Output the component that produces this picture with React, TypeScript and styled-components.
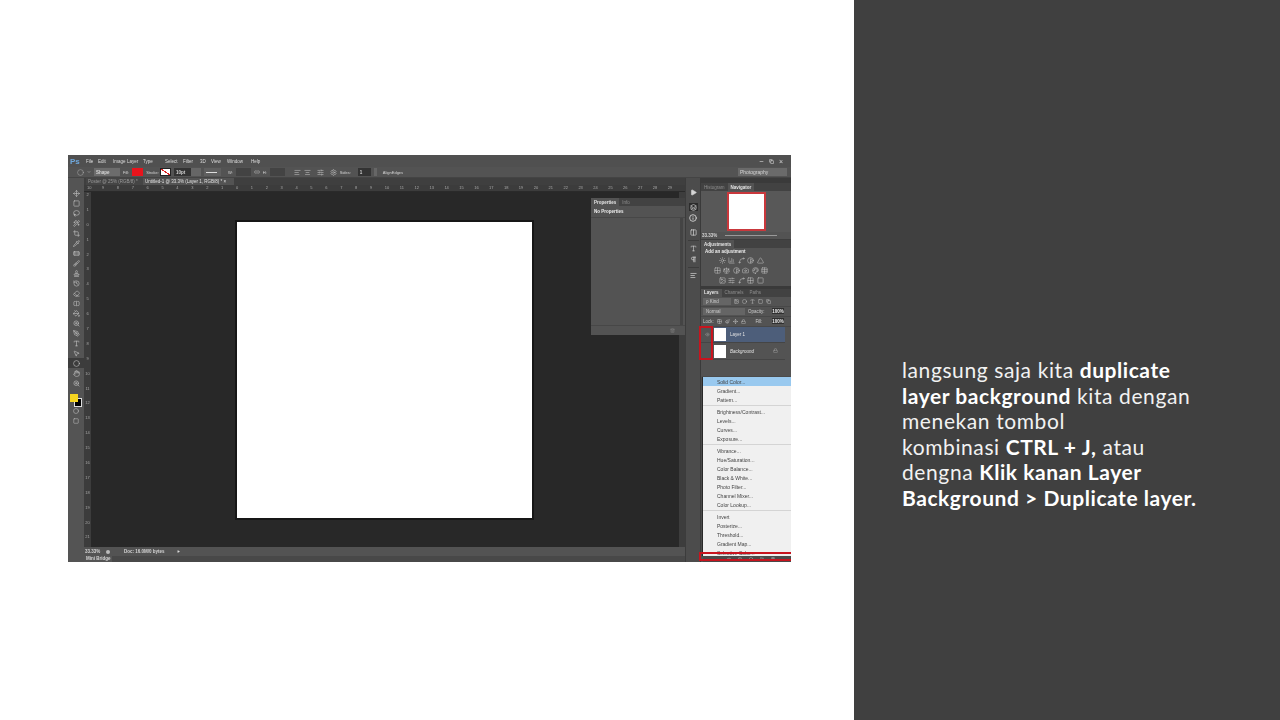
import React from "react";
import styled, { createGlobalStyle } from "styled-components";
import {
  Move, Square, Lasso, Wand2, Crop, Pipette, Bandage, Brush, Stamp, History, Eraser,
  SquareSplitHorizontal, PaintBucket, Circle, PenTool, Type, MousePointer2, Hand, ZoomIn,
  Settings, Link2, Lock, Eye, Play, ChevronDown, Sun, BarChart3, Spline, Contrast, Triangle,
  Grid2x2, Scale, Camera, Palette, Table, Image as ImageIcon, SlidersHorizontal, Layers, Info,
  AlignLeft, Pilcrow, Minus, Trash2, Paintbrush, FolderPlus, AlignCenter, Copy, Columns2,
} from "lucide-react";

const MENU_ITEMS = [
  ["File", 12], ["Edit", 15], ["Image", 14], ["Layer", 16], ["Type", 22], ["Select", 18],
  ["Filter", 17], ["3D", 11], ["View", 16], ["Window", 24], ["Help", 14],
] as const;

const TOOLS = [
  Move, Square, Lasso, Wand2, Crop, Pipette, Bandage, Brush, Stamp, History,
  Eraser, SquareSplitHorizontal, PaintBucket, ZoomIn, PenTool, Type, MousePointer2, Circle, Hand, ZoomIn,
];

const H_RULER = [10, 9, 8, 7, 6, 5, 4, 3, 2, 1, 0, ...Array.from({ length: 29 }, (_, i) => i + 1)];
const V_RULER = [2, 1, 0, ...Array.from({ length: 21 }, (_, i) => i + 1)];

const MENU_GROUPS = [
  ["Solid Color...", "Gradient...", "Pattern..."],
  ["Brightness/Contrast...", "Levels...", "Curves...", "Exposure..."],
  ["Vibrance...", "Hue/Saturation...", "Color Balance...", "Black & White...", "Photo Filter...", "Channel Mixer...", "Color Lookup..."],
  ["Invert", "Posterize...", "Threshold...", "Gradient Map...", "Selective Color..."],
];

const ADJUSTMENT_ROWS = [
  [Sun, BarChart3, Spline, Contrast, Triangle],
  [Grid2x2, Scale, Contrast, Camera, Palette, Table],
  [ImageIcon, SlidersHorizontal, Spline, Grid2x2, Square],
];

export default function App() {
  return (
    <Page>
      <GlobalStyle />
      <SlideArea>
        <PsWindow>
          <MenuBar>
            <PsLogo>Ps</PsLogo>
            {MENU_ITEMS.map(([label, w]) => (
              <MenuItem key={label} $w={w}>{label}</MenuItem>
            ))}
            <WindowControls>
              <Minus size={5} strokeWidth={3} />
              <Copy size={5} strokeWidth={3} />
              <WindowClose>×</WindowClose>
            </WindowControls>
          </MenuBar>

          <OptionsBar>
            <Circle size={7} strokeWidth={1.5} />
            <ChevronDown size={4} strokeWidth={3} />
            <OptBox $w={26} $bg="#6c6c6c" $bold>Shape</OptBox>
            <OptLabel>Fill:</OptLabel>
            <OptBox $w={11} $bg="#e8141c" />
            <OptLabel>Stroke:</OptLabel>
            <StrokeSwatch />
            <OptBox $w={17} $bg="#333" $bold>10pt</OptBox>
            <OptBox $w={10} $bg="#666" $flush />
            <OptBox $w={17} $bg="#5f5f5f"><LineSample /></OptBox>
            <OptSpacer $w={1} />
            <OptLabel>W:</OptLabel>
            <OptBox $w={15} $bg="#434343" />
            <Link2 size={6} />
            <OptLabel>H:</OptLabel>
            <OptBox $w={15} $bg="#434343" />
            <OptSpacer $w={3} />
            <AlignLeft size={7} />
            <AlignCenter size={7} />
            <OptSpacer $w={0} />
            <SlidersHorizontal size={7} />
            <OptSpacer $w={0} />
            <Settings size={7} />
            <OptLabel>Sides:</OptLabel>
            <OptSpacer $w={1} />
            <OptBox $w={13} $bg="#333" $bold>1</OptBox>
            <OptBox $w={3} $bg="#666" />
            <OptSpacer $w={0} />
            <OptLabel>AlignEdges</OptLabel>
            <WorkspaceSelect>Photography</WorkspaceSelect>
          </OptionsBar>

          <Body>
            <ToolStrip>
              <ToolHeader />
              {TOOLS.map((Icon, i) => (
                <ToolButton key={i} $active={Icon === Circle}>
                  <Icon size={7} strokeWidth={2} />
                </ToolButton>
              ))}
              <Swatches>
                <BackSwatch />
                <FrontSwatch />
              </Swatches>
              <ToolButton><Circle size={6} strokeWidth={2} /></ToolButton>
              <ToolButton><Square size={6} strokeWidth={2} /></ToolButton>
            </ToolStrip>

            <Workspace>
              <TabRow>
                <DocTab>Poster @ 25% (RGB/8) *</DocTab>
                <DocTab $active>Untitled-1 @ 33.3% (Layer 1, RGB/8) * ×</DocTab>
              </TabRow>
              <HRuler>
                {H_RULER.map((n, i) => <HTick key={i}>{n}</HTick>)}
              </HRuler>
              <CanvasRow>
                <VRuler>
                  {V_RULER.map((n, i) => <VTick key={i}>{n}</VTick>)}
                </VRuler>
                <Canvas>
                  <Doc />
                </Canvas>
                <CanvasScroll />
                <PropertiesPanel>
                  <PanelTabs>
                    <PanelTab $active>Properties</PanelTab>
                    <PanelTab>Info</PanelTab>
                  </PanelTabs>
                  <PropsTitle>No Properties</PropsTitle>
                  <PropsBody><PropsScroll /></PropsBody>
                  <PropsFooter><Trash2 size={5} /></PropsFooter>
                </PropertiesPanel>
              </CanvasRow>
              <StatusBar>
                <StatusText $w={21}>33.33%</StatusText>
                <StatusDot />
                <StatusText $w={53}>Doc: 16.0M/0 bytes</StatusText>
                <Play size={3} fill="#ddd" />
              </StatusBar>
              <BridgeRow><BridgeTab>Mini Bridge</BridgeTab></BridgeRow>
            </Workspace>

            <Dock>
              <DockIcon $mt={10}><Play size={7} fill="currentColor" /></DockIcon>
              <DockIcon $mt={7} $active><Layers size={7} strokeWidth={2.4} /></DockIcon>
              <DockIcon $mt={3}><Info size={8} strokeWidth={2.6} /></DockIcon>
              <DockIcon $mt={6}><Columns2 size={7} strokeWidth={2.4} /></DockIcon>
              <DockRule />
              <DockIcon $mt={3}><Type size={7} strokeWidth={2} /></DockIcon>
              <DockIcon $mt={3}><Pilcrow size={7} strokeWidth={2.4} /></DockIcon>
              <DockRule />
              <DockIcon $mt={3}><AlignLeft size={7} strokeWidth={2.4} /></DockIcon>
            </Dock>

            <Panels>
              <PanelCollapse />
              <PanelTabs>
                <PanelTab>Histogram</PanelTab>
                <PanelTab $active>Navigator</PanelTab>
              </PanelTabs>
              <NavPreview><NavThumb /></NavPreview>
              <NavZoom>
                <span>33.33%</span>
                <NavSlider />
              </NavZoom>

              <PanelTabs>
                <PanelTab $active>Adjustments</PanelTab>
              </PanelTabs>
              <AdjustTitle>Add an adjustment</AdjustTitle>
              {ADJUSTMENT_ROWS.map((row, r) => (
                <AdjustRow key={r}>
                  {row.map((Icon, i) => <Icon key={i} size={7} strokeWidth={1.8} />)}
                </AdjustRow>
              ))}

              <LayersGap />
              <PanelTabs>
                <PanelTab $active>Layers</PanelTab>
                <PanelTab>Channels</PanelTab>
                <PanelTab>Paths</PanelTab>
              </PanelTabs>
              <LayerControl>
                <FieldBox $w={28}>ρ Kind</FieldBox>
                <ImageIcon size={5} />
                <Circle size={5} />
                <Type size={5} />
                <Square size={5} />
                <Copy size={5} />
              </LayerControl>
              <LayerControl>
                <FieldBox $w={42}>Normal</FieldBox>
                <span>Opacity:</span>
                <ValueBox>100%</ValueBox>
              </LayerControl>
              <LayerControl>
                <span>Lock:</span>
                <Grid2x2 size={5} />
                <Paintbrush size={5} />
                <Move size={5} />
                <Lock size={5} />
                <FillLabel>Fill:</FillLabel>
                <ValueBox>100%</ValueBox>
              </LayerControl>
              <LayerRow $selected>
                <EyeCell><Eye size={5} /></EyeCell>
                <LayerThumb />
                <LayerName>Layer 1</LayerName>
              </LayerRow>
              <LayerRow>
                <EyeCell />
                <LayerThumb />
                <LayerName $italic>Background</LayerName>
                <LayerLock><Lock size={5} /></LayerLock>
              </LayerRow>
            </Panels>
          </Body>

          <AdjustMenu>
            {MENU_GROUPS.map((group, g) => (
              <MenuGroup key={g} $last={g === MENU_GROUPS.length - 1}>
                {group.map((item, i) => (
                  <AdjustItem key={item} $hover={g === 0 && i === 0}>{item}</AdjustItem>
                ))}
              </MenuGroup>
            ))}
          </AdjustMenu>
          <LayersFooter>
            <Link2 size={4} /><Layers size={4} /><Circle size={4} /><FolderPlus size={4} /><Trash2 size={4} />
          </LayersFooter>
          <EyeHighlight />
          <FooterHighlight />
        </PsWindow>
      </SlideArea>

      <SidePanel>
        <Caption>
          langsung saja kita <b>duplicate</b>
          <br />
          <b>layer background</b> kita dengan
          <br />
          menekan tombol
          <br />
          kombinasi <b>CTRL + J,</b> atau
          <br />
          dengna <b>Klik kanan Layer</b>
          <br />
          <b>Background &gt; Duplicate layer.</b>
        </Caption>
      </SidePanel>
    </Page>
  );
}

// styled-components -----------------
const GlobalStyle = createGlobalStyle`
  html, body {
    margin: 0;
    padding: 0;
    background: #fff;
  }
`;

const Page = styled.div`
  width: 1280px;
  height: 720px;
  display: flex;
  overflow: hidden;
`;

const SlideArea = styled.div`
  width: 854px;
  padding: 155px 0 0 68px;
  box-sizing: border-box;
  background: #fff;
`;

const SidePanel = styled.div`
  width: 426px;
  padding: 357px 0 0 48px;
  box-sizing: border-box;
  background: #404040;
`;

const Caption = styled.p`
  margin: 0;
  font-family: Lato, "Open Sans", sans-serif;
  font-size: 21px;
  letter-spacing: 0.6px;
  line-height: 25.6px;
  color: #f2f2f2;
  white-space: nowrap;
  b {
    font-weight: 700;
    letter-spacing: 0.55px;
    color: #fff;
  }
`;

const PsWindow = styled.div`
  position: relative;
  width: 723px;
  height: 407px;
  display: flex;
  flex-direction: column;
  overflow: hidden;
  background: #535353;
  color: #d4d4d4;
  font-family: "Liberation Sans", Arial, sans-serif;
  font-size: 5px;
  filter: blur(0.5px);
`;

const MenuBar = styled.div`
  height: 12px;
  display: flex;
  align-items: center;
  background: #505050;
`;

const PsLogo = styled.div`
  width: 18px;
  padding-left: 2px;
  box-sizing: border-box;
  color: #6fa8dc;
  font-size: 8px;
  font-weight: 700;
`;

const MenuItem = styled.span<{ $w: number }>`
  width: ${(p) => p.$w}px;
  font-size: 4.5px;
  color: #dcdcdc;
`;

const WindowControls = styled.div`
  margin-left: auto;
  margin-right: 8px;
  display: flex;
  align-items: center;
  gap: 5px;
`;

const WindowClose = styled.span`
  font-size: 7px;
  line-height: 7px;
`;

const OptionsBar = styled.div`
  height: 11px;
  padding-left: 9px;
  display: flex;
  align-items: center;
  gap: 3px;
  background: #535353;
  border-bottom: 1px solid #444;
  box-sizing: border-box;
  svg {
    flex: none;
    color: #bbb;
  }
`;

const OptBox = styled.div<{ $w: number; $bg: string; $bold?: boolean; $flush?: boolean }>`
  width: ${(p) => p.$w}px;
  height: 8px;
  flex: none;
  margin-left: ${(p) => (p.$flush ? "-3px" : "0")};
  padding-left: 2px;
  box-sizing: border-box;
  display: flex;
  align-items: center;
  background: ${(p) => p.$bg};
  font-size: 4.5px;
  font-weight: ${(p) => (p.$bold ? 700 : 400)};
`;

const OptLabel = styled.span`
  font-size: 4px;
  white-space: nowrap;
`;

const OptSpacer = styled.div<{ $w: number }>`
  width: ${(p) => p.$w}px;
  flex: none;
`;

const StrokeSwatch = styled.div`
  width: 11px;
  height: 8px;
  flex: none;
  margin-left: -2px;
  background: linear-gradient(to top right, #fff 45%, #d22 45%, #d22 55%, #fff 55%);
  border: 1px solid #222;
  box-sizing: border-box;
`;

const LineSample = styled.div`
  width: 11px;
  height: 1px;
  background: #ddd;
`;

const WorkspaceSelect = styled.div`
  width: 49px;
  height: 8px;
  margin-left: auto;
  margin-right: 4px;
  padding-left: 2px;
  box-sizing: border-box;
  display: flex;
  align-items: center;
  background: #6a6a6a;
  font-size: 5px;
`;

const Body = styled.div`
  flex: 1;
  display: flex;
  min-height: 0;
`;

const ToolStrip = styled.div`
  width: 16px;
  flex: none;
  display: flex;
  flex-direction: column;
  background: #545454;
`;

const ToolHeader = styled.div`
  height: 10px;
  flex: none;
`;

const ToolButton = styled.div<{ $active?: boolean }>`
  height: 10px;
  flex: none;
  display: flex;
  align-items: center;
  justify-content: center;
  background: ${(p) => (p.$active ? "#3c3c3c" : "transparent")};
  color: #c6c6c6;
`;

const Swatches = styled.div`
  position: relative;
  height: 18px;
  flex: none;
`;

const FrontSwatch = styled.div`
  position: absolute;
  left: 2px;
  top: 6px;
  width: 8px;
  height: 8px;
  background: #f6d51f;
`;

const BackSwatch = styled.div`
  position: absolute;
  left: 6px;
  top: 10px;
  width: 6px;
  height: 7px;
  background: #000;
  border: 1px solid #ddd;
`;

const Workspace = styled.div`
  flex: 1;
  min-width: 0;
  display: flex;
  flex-direction: column;
`;

const TabRow = styled.div`
  height: 7px;
  flex: none;
  padding-left: 2px;
  display: flex;
  background: #3f3f3f;
`;

const DocTab = styled.div<{ $active?: boolean }>`
  width: ${(p) => (p.$active ? "91px" : "57px")};
  padding-left: 2px;
  box-sizing: border-box;
  display: flex;
  align-items: center;
  background: ${(p) => (p.$active ? "#535353" : "#454545")};
  color: ${(p) => (p.$active ? "#e0e0e0" : "#999")};
  font-size: 4.5px;
  white-space: nowrap;
  overflow: hidden;
`;

const HRuler = styled.div`
  height: 7px;
  flex: none;
  padding-left: 3px;
  display: flex;
  overflow: hidden;
  background: #3c3c3c;
  border-bottom: 1px solid #2a2a2a;
  box-sizing: border-box;
`;

const HTick = styled.span`
  width: 14.9px;
  flex: none;
  color: #a8a8a8;
  font-size: 4px;
  line-height: 6px;
`;

const CanvasRow = styled.div`
  position: relative;
  flex: 1;
  min-height: 0;
  display: flex;
`;

const VRuler = styled.div`
  width: 7px;
  flex: none;
  display: flex;
  flex-direction: column;
  overflow: hidden;
  background: #3c3c3c;
`;

const VTick = styled.span`
  height: 14.9px;
  flex: none;
  text-align: center;
  color: #a8a8a8;
  font-size: 4px;
  line-height: 6px;
`;

const Canvas = styled.div`
  flex: 1;
  padding-right: 2px;
  display: flex;
  align-items: center;
  justify-content: center;
  background: #282828;
`;

const Doc = styled.div`
  width: 299px;
  height: 300px;
  box-sizing: border-box;
  background: #fff;
  border: 2px solid #161616;
`;

const CanvasScroll = styled.div`
  width: 6px;
  flex: none;
  background: #3d3d3d;
`;

const PropertiesPanel = styled.div`
  position: absolute;
  right: 0;
  top: 6px;
  width: 94px;
  height: 137px;
  display: flex;
  flex-direction: column;
  background: #535353;
`;

const PanelTabs = styled.div`
  height: 8px;
  flex: none;
  display: flex;
  background: #424242;
`;

const PanelTab = styled.div<{ $active?: boolean }>`
  padding: 0 3px;
  display: flex;
  align-items: center;
  background: ${(p) => (p.$active ? "#535353" : "transparent")};
  color: ${(p) => (p.$active ? "#e4e4e4" : "#8e8e8e")};
  font-size: 4.5px;
  font-weight: ${(p) => (p.$active ? 700 : 400)};
  white-space: nowrap;
`;

const PropsTitle = styled.div`
  height: 12px;
  flex: none;
  padding-left: 3px;
  display: flex;
  align-items: center;
  border-bottom: 1px solid #474747;
  box-sizing: border-box;
  font-size: 4.5px;
  font-weight: 700;
  color: #eee;
`;

const PropsBody = styled.div`
  flex: 1;
  display: flex;
  justify-content: flex-end;
  padding-right: 2px;
`;

const PropsScroll = styled.div`
  width: 3px;
  background: #444;
`;

const PropsFooter = styled.div`
  height: 10px;
  flex: none;
  padding-right: 10px;
  display: flex;
  align-items: center;
  justify-content: flex-end;
  border-top: 1px solid #474747;
  box-sizing: border-box;
  color: #8a8a8a;
`;

const StatusBar = styled.div`
  height: 9px;
  flex: none;
  padding-left: 1px;
  display: flex;
  align-items: center;
  background: #535353;
`;

const StatusText = styled.span<{ $w: number }>`
  width: ${(p) => p.$w}px;
  font-size: 4.5px;
  font-weight: 700;
  white-space: nowrap;
`;

const StatusDot = styled.div`
  width: 4px;
  height: 4px;
  margin-right: 14px;
  border-radius: 50%;
  background: #bbb;
`;

const BridgeRow = styled.div`
  height: 6px;
  flex: none;
  display: flex;
  background: #484848;
`;

const BridgeTab = styled.div`
  width: 28px;
  padding-left: 2px;
  box-sizing: border-box;
  background: #555;
  font-size: 4.5px;
  line-height: 6px;
  font-weight: 700;
`;

const Dock = styled.div`
  width: 15px;
  flex: none;
  box-sizing: border-box;
  display: flex;
  flex-direction: column;
  align-items: center;
  background: #4c4c4c;
  border-left: 1px solid #3c3c3c;
`;

const DockIcon = styled.div<{ $mt: number; $active?: boolean }>`
  width: 9px;
  height: 8px;
  margin-top: ${(p) => p.$mt}px;
  display: flex;
  align-items: center;
  justify-content: center;
  background: ${(p) => (p.$active ? "#2c2c2c" : "transparent")};
  color: #d6d6d6;
`;

const DockRule = styled.div`
  width: 11px;
  height: 1px;
  margin-top: 4px;
  background: #3c3c3c;
`;

const Panels = styled.div`
  width: 91px;
  flex: none;
  display: flex;
  flex-direction: column;
  background: #535353;
  border-left: 1px solid #3a3a3a;
  box-sizing: border-box;
`;

const PanelCollapse = styled.div`
  height: 5px;
  flex: none;
  background: #3a3a3a;
`;

const NavPreview = styled.div`
  height: 41px;
  flex: none;
  display: flex;
  align-items: center;
  justify-content: center;
  background: #585858;
`;

const NavThumb = styled.div`
  width: 39px;
  height: 39px;
  box-sizing: border-box;
  background: #fff;
  border: 2px solid #c9383c;
`;

const NavZoom = styled.div`
  height: 8px;
  flex: none;
  padding-left: 1px;
  display: flex;
  align-items: center;
  gap: 8px;
  border-bottom: 1px solid #3d3d3d;
  box-sizing: border-box;
  font-size: 4.5px;
  font-weight: 700;
`;

const NavSlider = styled.div`
  width: 52px;
  height: 1px;
  background: #999;
`;

const AdjustTitle = styled.div`
  height: 7px;
  flex: none;
  padding-left: 4px;
  display: flex;
  align-items: center;
  font-size: 4.5px;
  font-weight: 700;
  color: #eee;
`;

const AdjustRow = styled.div`
  height: 10.3px;
  flex: none;
  display: flex;
  align-items: center;
  justify-content: center;
  gap: 2.5px;
  padding-right: 10px;
  color: #c2c2c2;
`;

const LayersGap = styled.div`
  height: 3px;
  flex: none;
  background: #3a3a3a;
`;

const LayerControl = styled.div`
  height: 10px;
  flex: none;
  padding: 0 7px 0 2px;
  display: flex;
  align-items: center;
  gap: 3px;
  border-bottom: 1px solid #484848;
  box-sizing: border-box;
  font-size: 4.5px;
  color: #cdcdcd;
  white-space: nowrap;
`;

const FieldBox = styled.div<{ $w: number }>`
  width: ${(p) => p.$w}px;
  height: 7px;
  flex: none;
  padding-left: 3px;
  box-sizing: border-box;
  display: flex;
  align-items: center;
  background: #656565;
`;

const ValueBox = styled.div`
  width: 12px;
  height: 6px;
  flex: none;
  margin-left: auto;
  display: flex;
  align-items: center;
  justify-content: center;
  background: #2f2f2f;
  color: #eee;
  font-weight: 700;
`;

const FillLabel = styled.span`
  margin-left: auto;
`;

const LayerRow = styled.div<{ $selected?: boolean }>`
  width: 84px;
  height: 16.5px;
  flex: none;
  display: flex;
  align-items: center;
  background: ${(p) => (p.$selected ? "#4d5e7a" : "#535353")};
  border-bottom: 1px solid #454545;
  box-sizing: border-box;
`;

const EyeCell = styled.div`
  width: 13px;
  height: 100%;
  flex: none;
  display: flex;
  align-items: center;
  justify-content: center;
  background: #535353;
  color: #999;
`;

const LayerThumb = styled.div`
  width: 12px;
  height: 13px;
  flex: none;
  background: #fff;
`;

const LayerName = styled.span<{ $italic?: boolean }>`
  margin-left: 4px;
  font-size: 4.5px;
  font-style: ${(p) => (p.$italic ? "italic" : "normal")};
  color: #e4e4e4;
`;

const LayerLock = styled.div`
  margin-left: auto;
  margin-right: 7px;
  color: #aaa;
`;

const AdjustMenu = styled.div`
  position: absolute;
  left: 635px;
  top: 222px;
  width: 88px;
  height: 179px;
  box-sizing: border-box;
  background: #f0f0f0;
  box-shadow: -1px 0 1px rgba(0, 0, 0, 0.5);
`;

const MenuGroup = styled.div<{ $last?: boolean }>`
  padding-bottom: 1px;
  margin-bottom: 1px;
  border-bottom: ${(p) => (p.$last ? "none" : "1px solid #d4d4d4")};
`;

const AdjustItem = styled.div<{ $hover?: boolean }>`
  height: 9px;
  padding-left: 14px;
  display: flex;
  align-items: center;
  background: ${(p) => (p.$hover ? "#99c9ef" : "transparent")};
  color: #444;
  font-size: 5px;
`;

const LayersFooter = styled.div`
  position: absolute;
  left: 635px;
  top: 401px;
  width: 88px;
  height: 6px;
  padding-left: 24px;
  box-sizing: border-box;
  display: flex;
  align-items: center;
  gap: 7px;
  background: #4a4a4a;
  color: #ccc;
`;

const EyeHighlight = styled.div`
  position: absolute;
  left: 631px;
  top: 171px;
  width: 14px;
  height: 34px;
  box-sizing: border-box;
  border: 2px solid #c8141e;
`;

const FooterHighlight = styled.div`
  position: absolute;
  left: 631px;
  top: 397px;
  width: 92px;
  height: 9px;
  box-sizing: border-box;
  border: 2px solid #c8141e;
  border-right: none;
`;
